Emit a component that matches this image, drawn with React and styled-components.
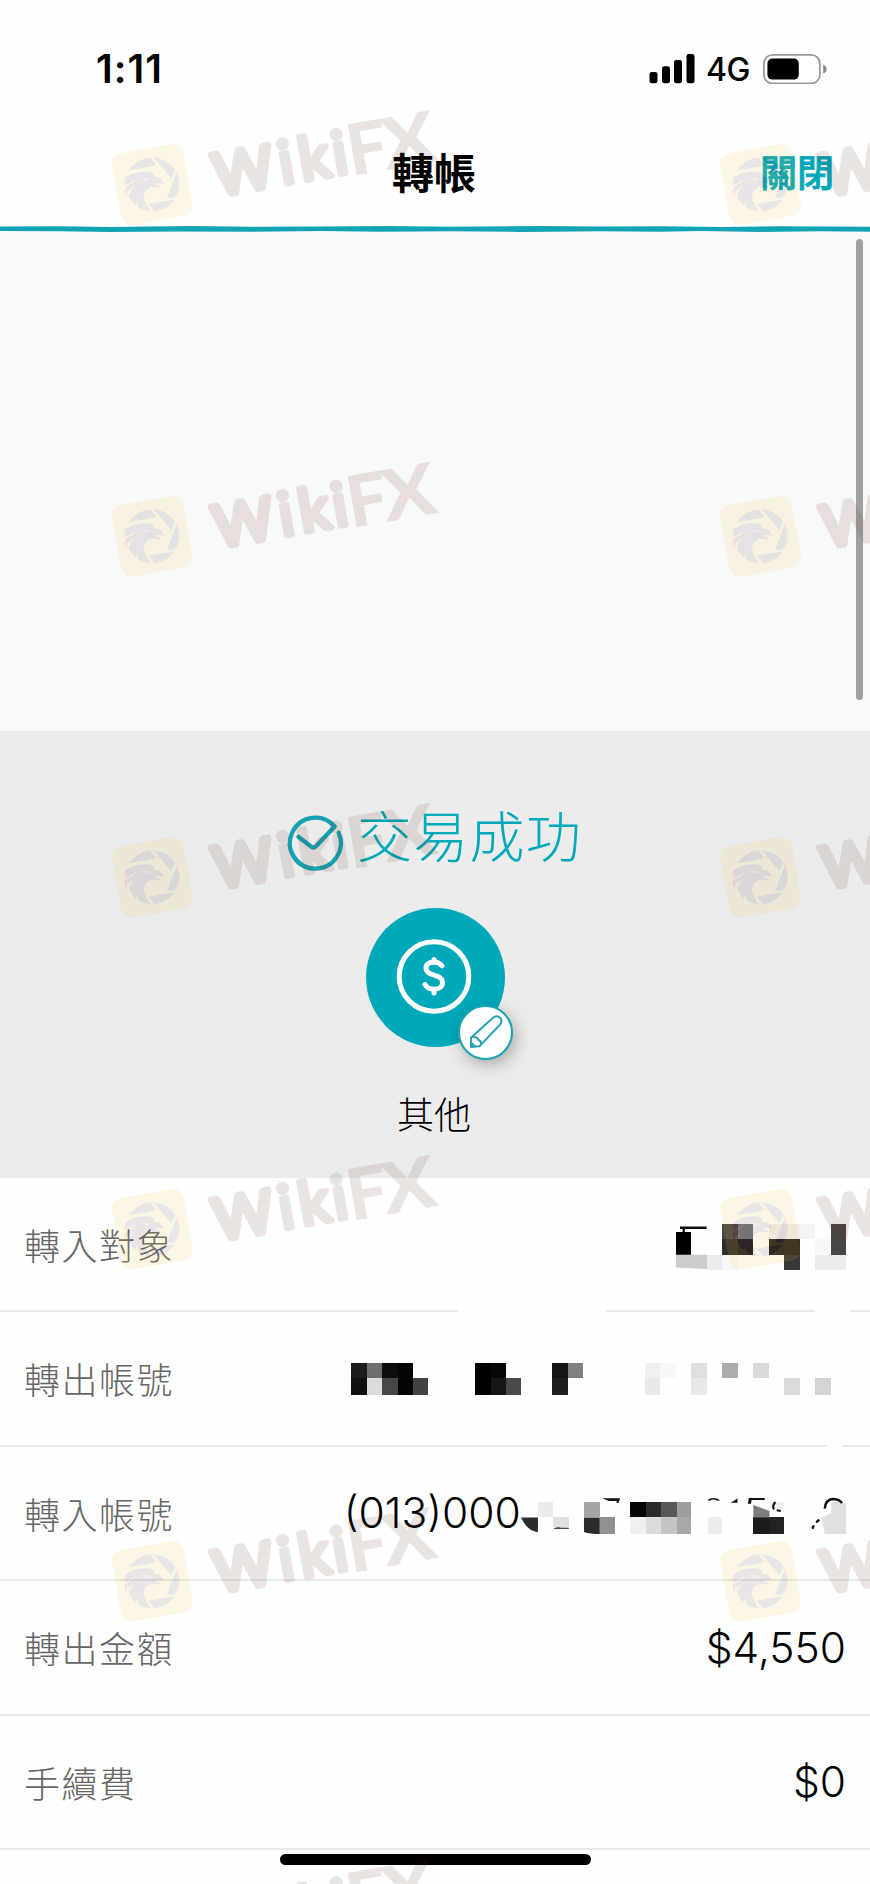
import React from 'react'
import styled, { createGlobalStyle } from 'styled-components'

const teal = '#00a9b9'

const GlobalStyle = createGlobalStyle`
  * {
    box-sizing: border-box;
  }

  body {
    margin: 0;
    background: #fff;
  }
`

const Page = styled.div`
  position: relative;
  width: 870px;
  height: 1884px;
  overflow: hidden;
  background: #fefefe;
  color: #000;
  font-family: Inter, 'Noto Sans CJK TC', sans-serif;
`

const StatusBar = styled.div`
  display: flex;
  align-items: center;
  justify-content: space-between;
  height: 138px;
  padding: 0 43px 0 96px;
`

const Time = styled.span`
  font-size: 39.5px;
  font-weight: 600;
  letter-spacing: 1.1px;
`

const StatusIcons = styled.div`
  display: flex;
  align-items: center;
`

const Network = styled.span`
  width: 57px;
  padding: 1px 0 0 11px;
  font-size: 32px;
  font-weight: 500;
  line-height: 32px;
  white-space: nowrap;
  letter-spacing: -0.6px;
`

const NavBar = styled.header`
  display: grid;
  grid-template-columns: 1fr auto 1fr;
  align-items: center;
  height: 72px;
  margin-bottom: 15px;
  padding: 0 36px 0 34px;
`

const Title = styled.h1`
  grid-column: 2;
  margin: 0;
  font-size: 42px;
  font-weight: 700;
  line-height: 1;
`

const CloseButton = styled.button`
  justify-self: end;
  padding: 0 0 1px;
  border: 0;
  background: none;
  color: ${teal};
  font-family: inherit;
  font-size: 37px;
  font-weight: 500;
  line-height: 1;
  -webkit-text-stroke: 0.8px ${teal};
`

const Block = styled.svg`
  display: block;
  flex: none;
`

const Banner = styled.div`
  height: 499px;
  background: #f9f9f9;
`

const ScrollThumb = styled.div`
  position: absolute;
  top: 239px;
  right: 7px;
  width: 7px;
  height: 461px;
  border-radius: 4px;
  background: #a0a0a0;
`

const Result = styled.section`
  display: flex;
  flex-direction: column;
  align-items: center;
  height: 446.5px;
  padding-top: 75px;
  background: #ececec;
`

const ResultTitle = styled.div`
  display: flex;
  align-items: center;
  gap: 15px;
  height: 62px;
  margin-left: -3px;
  color: ${teal};
  font-size: 55px;
  font-weight: 300;
  line-height: 60px;
  letter-spacing: 1.3px;

  svg {
    margin-top: 7px;
    overflow: visible;
  }
`

const Category = styled.div`
  position: relative;
  width: 139px;
  height: 139px;
  margin-top: 40px;
  border-radius: 50%;
  background: ${teal};
`

const EditBadge = styled.button`
  position: absolute;
  left: 92px;
  top: 97px;
  width: 55px;
  height: 55px;
  padding: 0 0 0 1px;
  border: 2px solid #1ba3b3;
  border-radius: 50%;
  background: #fff;
  box-shadow: 3px 5px 16px rgba(0, 0, 0, 0.28);
`

const CategoryName = styled.div`
  margin: 45px 0 0 -2px;
  font-size: 37px;
  font-weight: 300;
  line-height: 48px;
`

const Row = styled.div`
  display: flex;
  align-items: center;
  justify-content: space-between;
  height: 134.5px;
  padding: 0 24px 2px;
  background: ${props => props.$rule || 'linear-gradient(#e9e9e9, #e9e9e9)'} bottom / 100% 2px no-repeat;
`

const Label = styled.span`
  color: #666;
  font-size: 36px;
  font-weight: 300;
  letter-spacing: 1.5px;
`

const Value = styled.span`
  display: flex;
  align-items: center;
  font-size: 42.5px;
  font-weight: 300;
`

const HomeIndicator = styled.div`
  position: absolute;
  left: 280px;
  bottom: 19px;
  width: 311px;
  height: 11px;
  border-radius: 6px;
  background: #000;
`

const Overlay = styled.svg`
  position: absolute;
  inset: 0;
  pointer-events: none;
`

const MarkText = styled.text`
  fill: #612f1e;
  font-family: Lato, sans-serif;
  font-weight: ${props => (props.$bold ? 700 : 400)};
`

const firstRule = 'linear-gradient(90deg, #e9e9e9 458px, #fefefe 458px 606px, #e9e9e9 606px 815px, #fefefe 815px 851px, #e9e9e9 851px)'
const secondRule = 'linear-gradient(90deg, #e9e9e9 827px, #fefefe 827px 842px, #e9e9e9 842px)'

// [x, y, width, height, colour]
const payeeCells = [
  [108, 156, 45, 69, '#000'],
  [246, 132, 48, 45, '#484646'],
  [294, 132, 45, 45, '#7c7979'],
  [246, 177, 48, 48, '#302e2c'],
  [294, 177, 45, 48, '#262222'],
  [387, 132, 93, 45, '#f0eeee'],
  [480, 132, 45, 45, '#f4f4f5'],
  [387, 177, 93, 48, '#252220'],
  [432, 225, 48, 45, '#363636'],
  [525, 177, 48, 48, '#f8f8f8'],
  [573, 132, 45, 93, '#484646'],
  [525, 225, 93, 45, '#ececec'],
  [201, 225, 45, 45, '#ececec'],
  [246, 225, 48, 45, '#f8f8f8'],
]

const fromCells = [
  [61, 99, 46, 45, '#1c1c1c'],
  [107, 99, 44, 45, '#6e6e6e'],
  [151, 99, 45, 45, '#0d0d0d'],
  [196, 99, 45, 93, '#050505'],
  [61, 144, 46, 48, '#101010'],
  [107, 144, 44, 48, '#dcdcdc'],
  [151, 144, 45, 48, '#464646'],
  [241, 144, 44, 48, '#434343'],
  [421, 99, 45, 93, '#000'],
  [466, 99, 45, 45, '#070707'],
  [466, 144, 45, 48, '#151515'],
  [511, 144, 44, 48, '#4a4a4a'],
  [645, 99, 46, 45, '#151515'],
  [645, 144, 46, 48, '#1f1f1f'],
  [691, 99, 44, 45, '#808080'],
  [915, 99, 43, 45, '#f0f0f0'],
  [915, 144, 43, 48, '#e9e9e9'],
  [958, 99, 46, 45, '#f8f8f8'],
  [1048, 99, 47, 45, '#dfdfdf'],
  [1048, 144, 47, 48, '#e9e9e9'],
  [1138, 99, 47, 45, '#adadad'],
  [1228, 99, 47, 45, '#dadada'],
  [1318, 144, 47, 48, '#dcdcdc'],
  [1408, 144, 47, 48, '#d4d4d4'],
]

const toCells = [
  [601, 96, 44, 45, '#ebebeb'],
  [645, 141, 46, 29, '#e0e0e0'],
  [735, 96, 46, 45, '#a5a5a5'],
  [781, 141, 44, 48, '#919191'],
  [868, 96, 47, 45, '#050505'],
  [915, 96, 43, 45, '#2b2b2b'],
  [958, 96, 47, 45, '#585858'],
  [1005, 96, 43, 45, '#9e9e9e'],
  [868, 141, 47, 48, '#f0f0f0'],
  [915, 141, 43, 48, '#dcdcdc'],
  [958, 141, 47, 48, '#c5c5c5'],
  [1005, 141, 43, 48, '#a8a8a8'],
  [1095, 141, 43, 48, '#ededed'],
  [1228, 141, 47, 48, '#1b1b1b'],
  [1275, 141, 43, 48, '#222'],
]

const marks = [184.6, 536.3, 877.3, 1229.3, 1581.3, 1933]

const Mosaic = ({ cells, box, width, height, children }) => (
  <Block width={width} height={height} viewBox={box} shapeRendering="crispEdges">
    {cells.map(([x, y, w, h, fill]) => (
      <rect key={`${x}-${y}`} x={x} y={y} width={w} height={h} fill={fill} />
    ))}
    <g shapeRendering="auto">{children}</g>
  </Block>
)

const SignalIcon = () => (
  <Block width="46" height="30" viewBox="0 0 46 30">
    <rect x="0.5" y="18" width="8" height="11.3" rx="2.3" />
    <rect x="13" y="12.3" width="8" height="17" rx="2.3" />
    <rect x="25" y="6" width="8" height="23.3" rx="2.3" />
    <rect x="37.5" y="0" width="8" height="29.3" rx="2.3" />
  </Block>
)

const BatteryIcon = () => (
  <Block width="64" height="30" viewBox="0 0 64 30">
    <rect x="0.9" y="0.9" width="56" height="28.4" rx="8.5" fill="#fff" stroke="#999" strokeWidth="1.8" />
    <rect x="4.4" y="4.6" width="31.4" height="21" rx="5" />
    <path d="M60.2 10.4q3.4 1.6 3.4 4.6t-3.4 4.6z" fill="#888" />
  </Block>
)

const CheckIcon = () => (
  <Block width="57" height="57" viewBox="51 102.5 171 171">
    <path
      d="M91 177l38 29q8 6 15-1l56-59a76.500 76.500 0 1 0 12 19"
      fill="none"
      stroke="#16a2b2"
      strokeWidth="13"
      strokeLinecap="round"
      strokeLinejoin="round"
    />
  </Block>
)

const CoinIcon = () => (
  <Block width="139" height="139" viewBox="0 0 139 139" fill="none" stroke="#fff">
    <circle cx="68" cy="68.500" r="34.800" strokeWidth="5" />
    <path
      d="M76 57.800q-3-3.800-8-3.800c-5 0-8 2.700-8 6.300 0 4.200 3.200 5.600 8 6.800 5.400 1.300 8.600 2.900 8.600 7.100 0 4.300-3.600 7-8.600 7-4.700 0-7.400-1.600-9-4.600M68 51.500v3M68 82v3"
      strokeWidth="5"
      strokeLinecap="round"
    />
  </Block>
)

const PencilIcon = () => (
  <Block width="50" height="50" viewBox="573 683 150 150" fill="none" stroke="#23a3b3" strokeWidth="6" strokeLinejoin="round">
    <path d="M603 772l66-60q11-9 21 0 9 10 0 21l-62 65-25 1zM609 770q15-1 16 9 10 3 8 14" />
    <path d="M604 799l11-1-11-10z" fill="#23a3b3" />
  </Block>
)

// the right column runs off the screen after the first letter
const Watermark = ({ clipped }) => (
  <g opacity="0.12">
    <g transform="rotate(-10)">
      <rect x="-36.300" y="-36.300" width="72.600" height="72.600" rx="10.500" fill="#f5c43a" />
      <g stroke="#612f1e" strokeLinejoin="round">
        <MarkText x="62" y="22.500" fontSize="58" strokeWidth="6.500" textLength="60" lengthAdjust="spacingAndGlyphs">W</MarkText>
        {!clipped && (
          <>
            <MarkText y="22.500" fontSize="60" x="128 148.500 182.500" strokeWidth="5.500">iki</MarkText>
            <MarkText $bold y="26" fontSize="70" x="198" strokeWidth="1.200">F</MarkText>
            <MarkText $bold x="234" y="26" fontSize="70" strokeWidth="1.200" textLength="52" lengthAdjust="spacingAndGlyphs">X</MarkText>
          </>
        )}
      </g>
    </g>
    <g transform="scale(0.3333) translate(-211 -229)" fill="#614050">
      <path d="M140 187q23-33 65-40l18 25zM214 147q42 5 65 37l-11 27zM284 193q19 39-4 75l-25 2zM200 287l77-13q-20 31-59 36z" />
      <path d="M132 206q35-21 76-15 9 4 10 14 22 3 29 23-14-5-29-1 17 4 17 12-33-9-45 11-9 17 0 33l15 27q-20-1-36-12l-3-20-5 14q-22-18-23-49l-5 20q-7-13-6-21l20-19-19 8q-2-15 4-30z" />
      <path d="M138 228l26-16-15 15zM132 255l22-20-13 27z" fill="#f5c43a" />
      <path d="M183 209q10 4 21 1-1 6-10 6-7-1-11-7z" fill="#f5c43a" />
    </g>
  </g>
)

const App = () => (
  <Page>
    <GlobalStyle />
    <StatusBar>
      <Time>1:11</Time>
      <StatusIcons>
        <SignalIcon />
        <Network>4G</Network>
        <Block width="11" height="1" />
        <BatteryIcon />
      </StatusIcons>
    </StatusBar>
    <NavBar>
      <Title>轉帳</Title>
      <CloseButton>關閉</CloseButton>
    </NavBar>
    <Block width="870" height="7" viewBox="0 0 870 7">
      <rect y="4" width="870" height="3" fill="#f9f9f9" />
      <path
        d="M0 1.600L60 1.200 110 2 190 1 250 1.800 320 1.600 390 1 450 1.800 540 1 600 1.600 660 1.200 720 2 780 1.300 870 1.700V6.700L820 6.300 760 6.900 700 6.100 660 6.700 600 6.300 520 6.900 450 6.200 380 6.800 320 6.100 250 6.700 180 6.500 110 7 60 6.300 0 6.100z"
        fill="#12a4b4"
      />
    </Block>
    <Banner />
    <Result>
      <ResultTitle>
        <CheckIcon />
        <span>交易成功</span>
      </ResultTitle>
      <Category>
        <CoinIcon />
        <EditBadge>
          <PencilIcon />
        </EditBadge>
      </Category>
      <CategoryName>其他</CategoryName>
    </Result>
    <Row $rule={firstRule}>
      <Label>轉入對象</Label>
      <Mosaic cells={payeeCells} box="108 114.75 510 156" width="170" height="52">
        <path d="M120 144h80M131 144v14" stroke="#111" strokeWidth="7" />
        <path d="M108 225h93v43l-93-5z" fill="#cdcdcd" />
      </Mosaic>
    </Row>
    <Row $rule={secondRule}>
      <Label>轉出帳號</Label>
      <Mosaic cells={fromCells} box="61 94.500 1437 100" width="495" height="34.400" />
    </Row>
    <Row>
      <Label>轉入帳號</Label>
      <Value>
        <span>(013)000</span>
        <Mosaic cells={toCells} box="552 61 946 131" width="325.200" height="45">
          <path d="M552 141h49v43q-32-4-49-43zM735 141h46v48q-28 0-46-6z" fill="#2b2b2b" />
          <path d="M645 174q12-7 24-3h22v3zM788 85h52l-4 13-6 1v-6h-22z" fill="#111" />
          <path d="M1094 91q16-13 38 0l-9 1q-12-6-21 0zM1162 98l20-12v12zM1212 101l3-17h46v6h-38l-2 11z" fill="#111" />
          <path d="M1228 105l47 17v19h-47z" fill="#7d7d7d" />
          <path d="M1275 96h43v28l-43-12z" fill="#f0f0f0" />
          <path d="M1292 96q-10 12-4 22M1296 120l12 2" stroke="#111" strokeWidth="6" fill="none" />
          <path d="M1426 141l29-12V96h28l15 7v86h-62z" fill="#e0e0e0" />
          <path d="M1436 115q2-27 24-28 19 1 26 12M1400 174l4-10M1411 155l9-8" stroke="#111" strokeWidth="7" fill="none" />
        </Mosaic>
      </Value>
    </Row>
    <Row>
      <Label>轉出金額</Label>
      <Value>$4,550</Value>
    </Row>
    <Row>
      <Label>手續費</Label>
      <Value>$0</Value>
    </Row>
    <ScrollThumb />
    <HomeIndicator />
    <Overlay width="870" height="1884" viewBox="0 0 870 1884">
      {marks.map(y => (
        <React.Fragment key={y}>
          <g transform={`translate(152.3 ${y})`}><Watermark /></g>
          <g transform={`translate(760.5 ${y})`}><Watermark clipped /></g>
        </React.Fragment>
      ))}
    </Overlay>
  </Page>
)

export default App
